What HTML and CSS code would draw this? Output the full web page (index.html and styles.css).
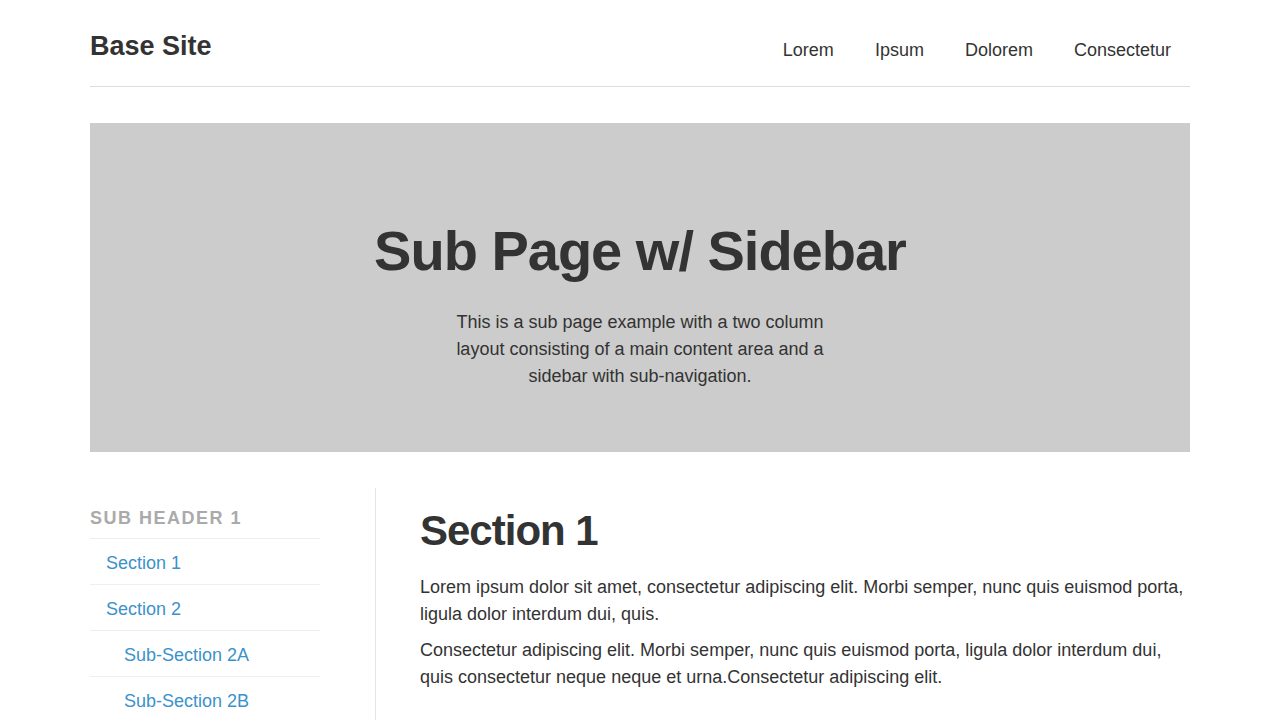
FILE: index.html
```html
<!DOCTYPE html>
<html lang="en">
<head>
<meta charset="utf-8">
<title>Sub Page w/ Sidebar</title>
<link rel="stylesheet" href="styles.css">
</head>
<body>
<div class="container">
  <header class="site-header">
    <div class="brand">Base Site</div>
    <nav class="main-nav">
      <a href="#">Lorem</a>
      <a href="#">Ipsum</a>
      <a href="#">Dolorem</a>
      <a href="#">Consectetur</a>
    </nav>
  </header>

  <section class="hero">
    <h1>Sub Page w/ Sidebar</h1>
    <p>This is a sub page example with a two column layout consisting of a main content area and a sidebar with sub-navigation.</p>
  </section>

  <div class="columns">
    <aside class="sidebar">
      <h3 class="side-title">Sub Header 1</h3>
      <ul class="side-nav">
        <li><a href="#">Section 1</a></li>
        <li><a href="#">Section 2</a></li>
        <li class="sub"><a href="#">Sub-Section 2A</a></li>
        <li class="sub"><a href="#">Sub-Section 2B</a></li>
      </ul>
    </aside>
    <main class="content">
      <h2>Section 1</h2>
      <p>Lorem ipsum dolor sit amet, consectetur adipiscing elit. Morbi semper, nunc quis euismod porta, ligula dolor interdum dui, quis.</p>
      <p>Consectetur adipiscing elit. Morbi semper, nunc quis euismod porta, ligula dolor interdum dui, quis consectetur neque neque et urna.Consectetur adipiscing elit.</p>
    </main>
  </div>
</div>
</body>
</html>
```
FILE: styles.css
```css
* { box-sizing: border-box; }
html, body { margin: 0; padding: 0; background: #fff; }
body {
  font-family: "Liberation Sans", Arial, Helvetica, sans-serif;
  color: #333;
  font-size: 18px;
  line-height: 27px;
}
a { text-decoration: none; }

.container {
  width: 1100px;
  margin: 0 auto;
}

.site-header {
  display: flex;
  justify-content: space-between;
  align-items: center;
  height: 87px;
  border-bottom: 1px solid #ddd;
}
.brand {
  font-size: 27px;
  font-weight: bold;
  line-height: 32px;
  margin-top: 5px;
}
.main-nav {
  display: flex;
  gap: 41px;
  padding-right: 19px;
  margin-top: 14px;
}
.main-nav a {
  color: #333;
  font-size: 18px;
}

.hero {
  margin-top: 36px;
  background: #ccc;
  height: 329px;
  display: flex;
  flex-direction: column;
  align-items: center;
  padding-top: 96px;
  text-align: center;
}
.hero h1 {
  margin: 0;
  font-size: 56px;
  line-height: 64px;
  letter-spacing: -1px;
  font-weight: bold;
}
.hero p {
  margin: 26px 0 0;
  width: 380px;
  font-size: 18px;
  line-height: 27px;
}

.columns {
  display: flex;
  margin-top: 36px;
}
.sidebar {
  width: 286px;
  border-right: 1px solid #e5e5e5;
  padding-right: 55px;
  padding-top: 16px;
}
.side-title {
  margin: 0;
  color: #aaa;
  text-transform: uppercase;
  letter-spacing: 1.5px;
  font-size: 18px;
  line-height: 28px;
  padding-bottom: 6px;
  border-bottom: 1px solid #eee;
}
.side-nav {
  list-style: none;
  margin: 0;
  padding: 0;
}
.side-nav li {
  border-bottom: 1px solid #eee;
  height: 46px;
  display: flex;
  align-items: center;
  padding-left: 16px;
  padding-top: 3px;
}
.side-nav li.sub { padding-left: 34px; }
.side-nav a {
  color: #3a92cb;
  font-size: 18px;
}

.content {
  flex: 1;
  padding-left: 44px;
  padding-top: 17px;
}
.content h2 {
  margin: 0 0 17px;
  font-size: 42px;
  line-height: 52px;
  letter-spacing: -1px;
  font-weight: bold;
}
.content p {
  margin: 0 0 9px;
}
```
